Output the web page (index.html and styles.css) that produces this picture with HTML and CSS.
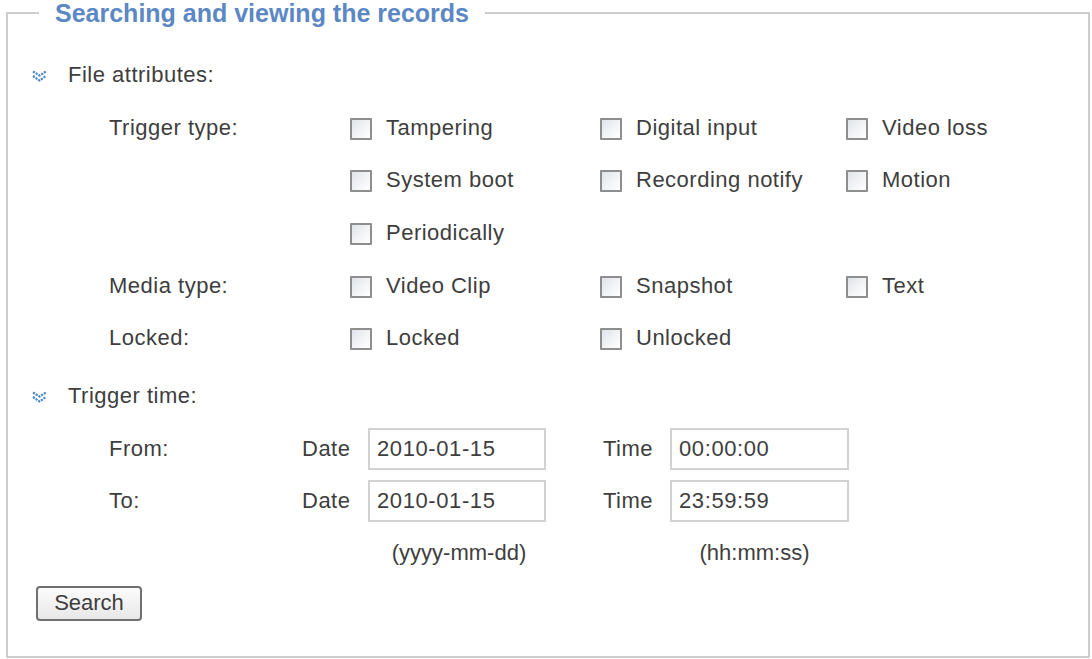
FILE: index.html
```html
<!DOCTYPE html>
<html>
<head>
<meta charset="utf-8">
<title>Searching and viewing the records</title>
<link rel="stylesheet" href="styles.css">
</head>
<body>
<fieldset class="panel">
  <legend class="panel-title">Searching and viewing the records</legend>
  <div class="panel-body">
    <div class="section-head">
      <svg class="chev" viewBox="0 0 15 12" width="15" height="12"><polyline points="1,1.5 7.5,5.5 14,1.5" /><polyline points="1,6 7.5,10.5 14,6" /></svg>
      <span>File attributes:</span>
    </div>
    <div class="attr-grid">
      <div class="lbl">Trigger type:</div>
      <label class="opt"><input type="checkbox" class="cb"><span>Tampering</span></label>
      <label class="opt"><input type="checkbox" class="cb"><span>Digital input</span></label>
      <label class="opt"><input type="checkbox" class="cb"><span>Video loss</span></label>

      <div class="lbl"></div>
      <label class="opt"><input type="checkbox" class="cb"><span>System boot</span></label>
      <label class="opt"><input type="checkbox" class="cb"><span>Recording notify</span></label>
      <label class="opt"><input type="checkbox" class="cb"><span>Motion</span></label>

      <div class="lbl"></div>
      <label class="opt"><input type="checkbox" class="cb"><span>Periodically</span></label>
      <div></div>
      <div></div>

      <div class="lbl">Media type:</div>
      <label class="opt"><input type="checkbox" class="cb"><span>Video Clip</span></label>
      <label class="opt"><input type="checkbox" class="cb"><span>Snapshot</span></label>
      <label class="opt"><input type="checkbox" class="cb"><span>Text</span></label>

      <div class="lbl">Locked:</div>
      <label class="opt"><input type="checkbox" class="cb"><span>Locked</span></label>
      <label class="opt"><input type="checkbox" class="cb"><span>Unlocked</span></label>
      <div></div>
    </div>

    <div class="section-head section-gap">
      <svg class="chev" viewBox="0 0 15 12" width="15" height="12"><polyline points="1,1.5 7.5,5.5 14,1.5" /><polyline points="1,6 7.5,10.5 14,6" /></svg>
      <span>Trigger time:</span>
    </div>
    <div class="time-grid">
      <div class="lbl">From:</div>
      <div class="lbl">Date</div>
      <input class="field" type="text" value="2010-01-15">
      <div></div>
      <div class="lbl">Time</div>
      <input class="field" type="text" value="00:00:00">

      <div class="lbl">To:</div>
      <div class="lbl">Date</div>
      <input class="field" type="text" value="2010-01-15">
      <div></div>
      <div class="lbl">Time</div>
      <input class="field" type="text" value="23:59:59">

      <div class="hint hint-date">(yyyy-mm-dd)</div>
      <div class="hint hint-time">(hh:mm:ss)</div>
    </div>
    <button class="btn" type="button">Search</button>
  </div>
</fieldset>
</body>
</html>
```

FILE: styles.css
```css
html, body {
  margin: 0;
  padding: 0;
  background: #ffffff;
}

body {
  font-family: "Liberation Sans", Arial, sans-serif;
  font-size: 22px;
  color: #3e3e3e;
}

.panel {
  box-sizing: border-box;
  margin: 0 0 0 6px;
  padding: 0;
  width: 1084px;
  height: 658px;
  border: 2px solid #cdcdcd;
  min-width: 0;
}

.panel-title {
  margin-left: 31px;
  padding: 0 16px;
  font-size: 25px;
  font-weight: bold;
  line-height: 26px;
  color: #5b88c4;
}

.panel-body {
  padding-top: 23px;
}

.section-head {
  display: flex;
  align-items: center;
  height: 52.6px;
  padding-left: 24px;
  letter-spacing: 0.5px;
}

.section-head span {
  margin-left: 21px;
}

.section-gap {
  margin-top: 5.4px;
}

.chev {
  display: block;
  margin-top: 1px;
}

.chev polyline {
  fill: none;
  stroke: #4a86c8;
  stroke-width: 2.2;
  stroke-dasharray: 2.2 1;
}

.attr-grid {
  display: grid;
  grid-template-columns: 241px 250px 246px 1fr;
  grid-auto-rows: 52.6px;
  padding-left: 101px;
}

.lbl {
  display: flex;
  align-items: center;
  letter-spacing: 0.5px;
}

.opt {
  display: flex;
  align-items: center;
  gap: 14px;
  letter-spacing: 0.5px;
}

.cb {
  appearance: none;
  -webkit-appearance: none;
  box-sizing: border-box;
  width: 22px;
  height: 22px;
  margin: 2px 0 0 0;
  border: 2px solid #8e8e8e;
  border-radius: 1px;
  background: linear-gradient(135deg, #dfe3e8 0%, #f3f4f6 55%, #ffffff 100%);
}

.time-grid {
  display: grid;
  grid-template-columns: 193px 66px 178px 57px 67px 179px;
  grid-template-rows: 52.6px 52.6px 50px;
  padding-left: 101px;
}

.field {
  box-sizing: border-box;
  align-self: center;
  width: 100%;
  height: 42px;
  margin: 0;
  padding: 0 0 0 7px;
  border: 2px solid #d2d2d2;
  font-family: "Liberation Sans", Arial, sans-serif;
  font-size: 22px;
  letter-spacing: 0.6px;
  color: #3e3e3e;
  background: #ffffff;
}

.hint {
  display: flex;
  align-items: center;
  justify-content: center;
  padding-left: 4px;
}

.hint-date {
  grid-column: 3;
}

.hint-time {
  grid-column: 6;
  padding-left: 0;
  padding-right: 10px;
}

.btn {
  box-sizing: border-box;
  display: block;
  margin: 8px 0 0 28px;
  width: 106px;
  height: 35px;
  padding: 0;
  border: 2px solid #707070;
  border-radius: 4px;
  background: linear-gradient(#fbfbfb, #e8e8e8);
  font-family: "Liberation Sans", Arial, sans-serif;
  font-size: 22px;
  color: #3e3e3e;
}
```
